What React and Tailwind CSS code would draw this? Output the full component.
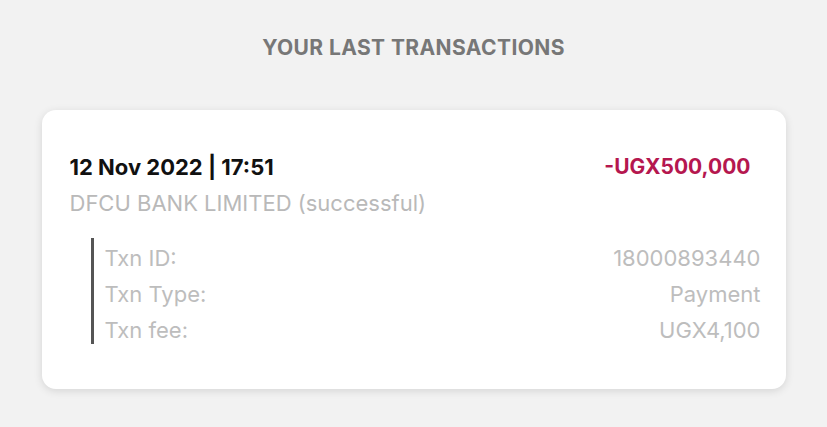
export default function App() {
    const rows = [
        { label: "Txn ID:", value: "18000893440" },
        { label: "Txn Type:", value: "Payment" },
        { label: "Txn fee:", value: "UGX4,100" },
    ];

    return (
        <div
            className="w-[827px] h-[427px] bg-[#f2f2f2] flex flex-col items-center overflow-hidden"
            style={{ fontFamily: "Inter, 'Open Sans', sans-serif" }}
        >
            <h2 className="mt-[35px] text-[21px] leading-[26px] font-bold text-[#777777] tracking-[0.4px]">
                YOUR LAST TRANSACTIONS
            </h2>
            <div className="mt-[49px] w-[744px] h-[279px] bg-white rounded-[14px] shadow-[0_2px_9px_rgba(0,0,0,0.12)] pt-[43px] pl-[28px] pr-[25px]">
                <div className="flex justify-between items-center pr-[10px]">
                    <span className="text-[22px] leading-[28px] font-bold text-[#111111]">
                        12 Nov 2022 | 17:51
                    </span>
                    <span className="text-[21px] leading-[28px] font-bold text-[#b5174f]">
                        -UGX500,000
                    </span>
                </div>
                <div className="mt-[8px] text-[22px] leading-[28px] text-[#b9b9b9]">
                    DFCU BANK LIMITED (successful)
                </div>
                <div className="mt-[21px] ml-[21px] border-l-[3px] border-[#555555] pl-[11px] pt-[6px] flex flex-col gap-[8px]">
                    {rows.map((r) => (
                        <div
                            key={r.label}
                            className="flex justify-between text-[22px] leading-[28px] text-[#bdbdbd]"
                        >
                            <span>{r.label}</span>
                            <span>{r.value}</span>
                        </div>
                    ))}
                </div>
            </div>
        </div>
    );
}
